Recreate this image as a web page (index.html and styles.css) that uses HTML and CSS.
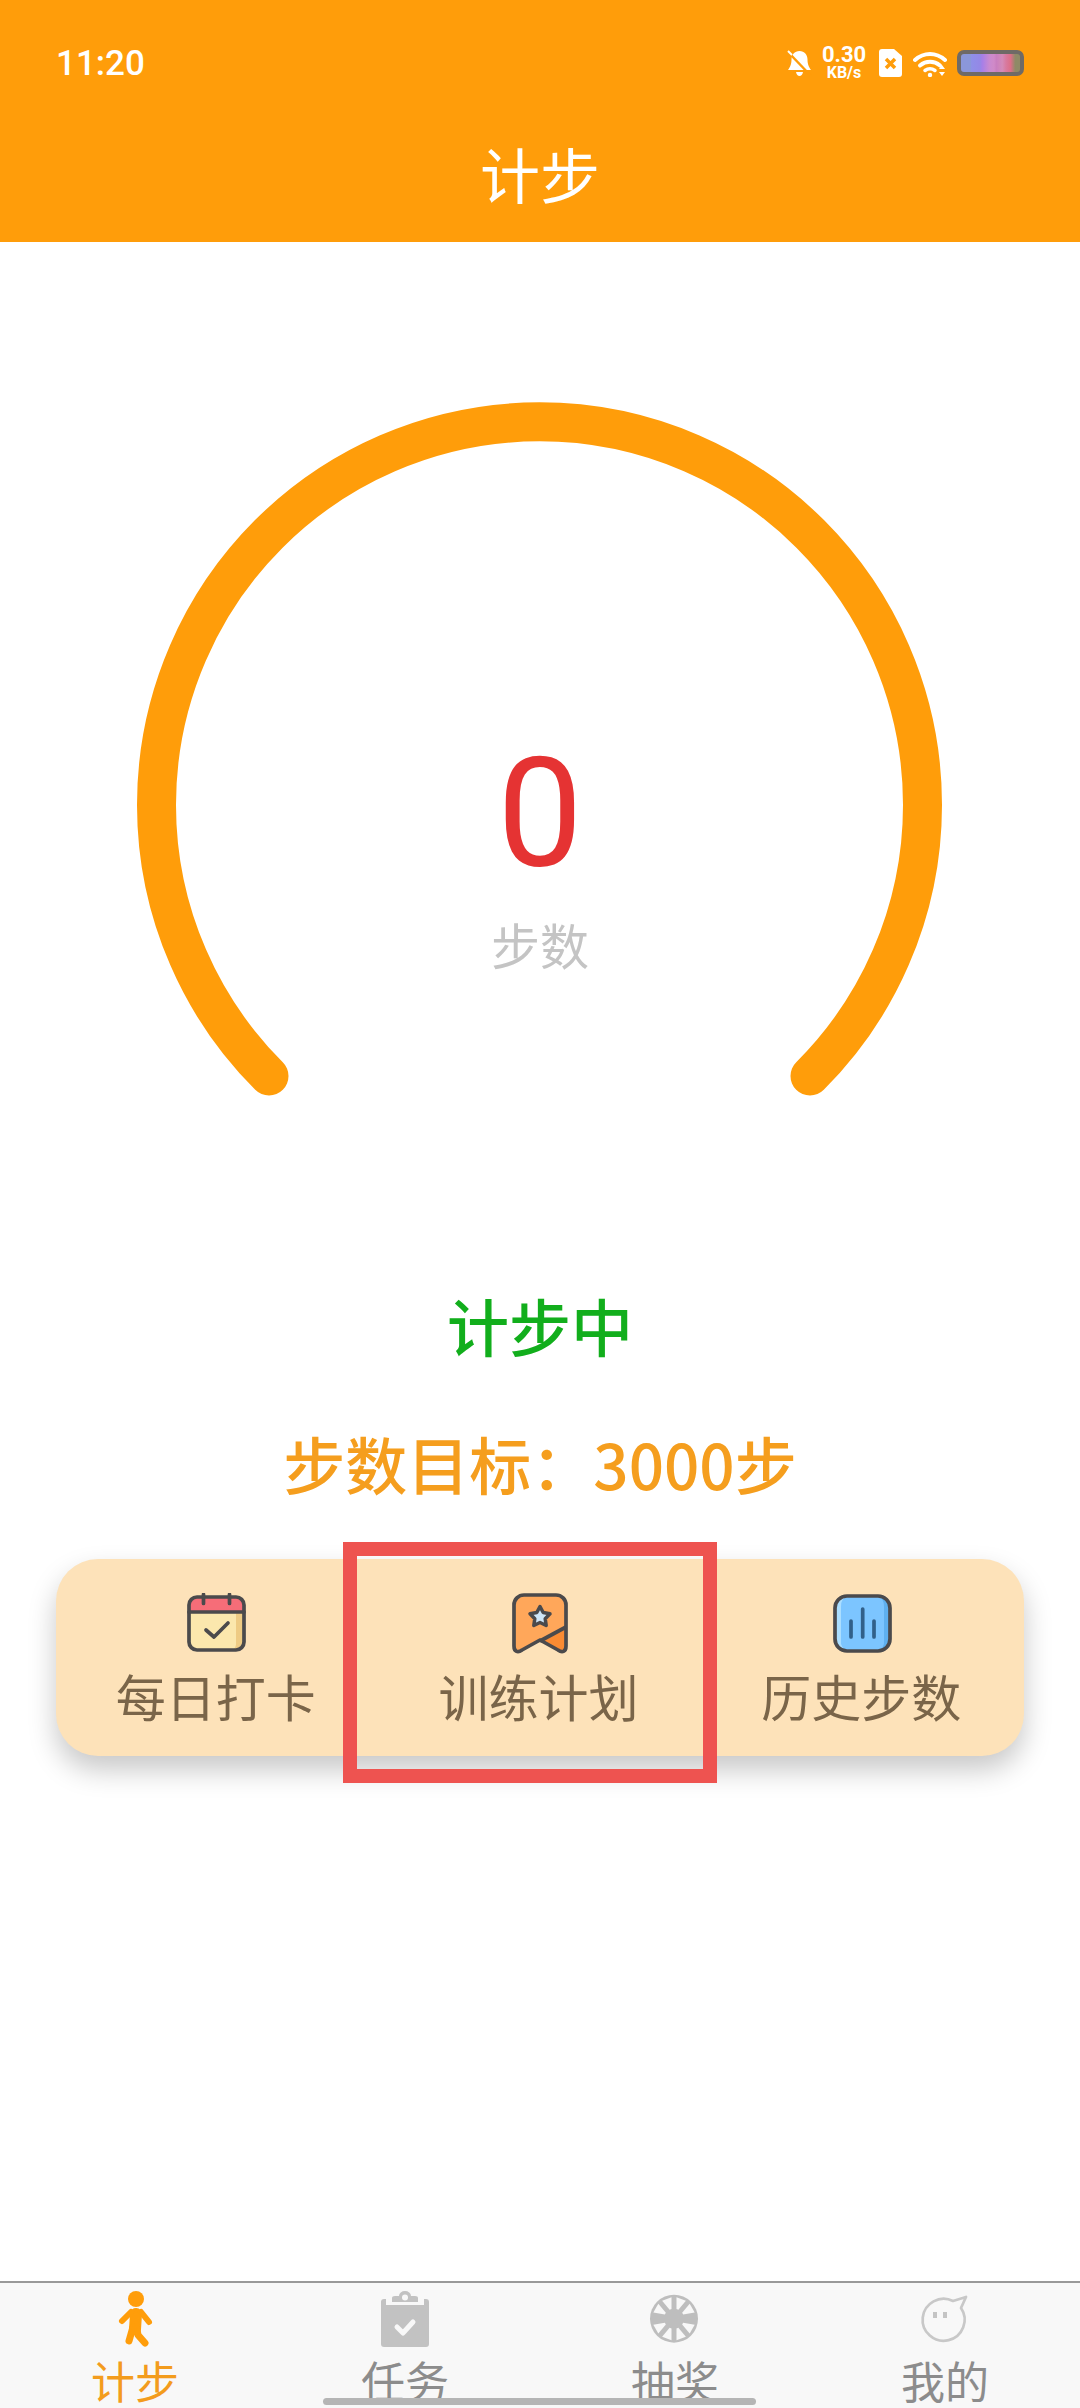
FILE: index.html
```html
<!DOCTYPE html>
<html lang="zh-CN">
<head>
    <meta charset="UTF-8">
    <meta name="viewport" content="width=device-width, initial-scale=1.0">
    <title>计步</title>
    <link rel="stylesheet" href="styles.css">
</head>
<body>

    <header class="header">
        <div class="status-bar">
            <span class="clock">11:20</span>
            <div class="status-icons">
                <svg class="icon-bell" viewBox="0 0 25 27">
                    <path d="M12.500 1c-5 0-8 3.800-8 8.500 0 5-1.500 7.500-3.500 10.500h23c-2-3-3.500-5.500-3.500-10.500 0-4.700-3-8.500-8-8.500z" fill="#fff"/>
                    <path d="M9 22h7c-.5 2.600-1.800 4-3.500 4S9.500 24.600 9 22z" fill="#fff"/>
                    <path d="M2 3l22 23" stroke="#ff9d0a" stroke-width="2.500"/>
                    <path d="M1 1l4 4" stroke="#fff" stroke-width="2"/>
                </svg>
                <div class="net-speed">
                    <span class="net-value">0.30</span>
                    <span class="net-unit">KB/s</span>
                </div>
                <svg class="icon-sim" viewBox="0 0 23 28">
                    <path d="M3 0h12l8 7v18a3 3 0 0 1-3 3H3a3 3 0 0 1-3-3V3a3 3 0 0 1 3-3z" fill="#fff"/>
                    <path d="M7 10l9 9M16 10l-9 9" stroke="#ff9d0a" stroke-width="3.500"/>
                </svg>
                <svg class="icon-wifi" viewBox="0 0 34 27">
                    <path d="M2 10C11 2 23 2 32 10" fill="none" stroke="#fff" stroke-width="4" stroke-linecap="round"/>
                    <path d="M7 15.500c6-5 14-5 20 0" fill="none" stroke="#fff" stroke-width="4" stroke-linecap="round"/>
                    <path d="M12 20.500c3-2.200 7-2.200 10 0" fill="none" stroke="#fff" stroke-width="3.500" stroke-linecap="round"/>
                    <circle cx="17" cy="25" r="2.200" fill="#fff"/>
                    <path d="M29 15l3 4h-6zM29 26l3-4h-6z" fill="#fff"/>
                </svg>
                <div class="battery"><div class="battery-fill"></div></div>
            </div>
        </div>
        <h1 class="page-title">计步</h1>
    </header>

    <main class="main">
        <div class="gauge">
            <svg class="gauge-arc" viewBox="120 385 840 720">
                <path d="M269 1076A383 383 0 1 1 810 1076" fill="none" stroke="#ff9d0a" stroke-width="39" stroke-linecap="round"/>
            </svg>
            <div class="gauge-text">
                <div class="step-count">0</div>
                <div class="step-label">步数</div>
            </div>
        </div>

        <div class="step-state">计步中</div>
        <div class="step-goal">步数目标：3000步</div>

        <div class="menu-card">
            <div class="menu-item">
                <svg class="menu-icon" viewBox="0 0 62 62">
                    <path d="M3 19v-7a8 8 0 0 1 8-8h39a8 8 0 0 1 8 8v7z" fill="#f66d78"/>
                    <path d="M3 19h55v31a7 7 0 0 1-7 7H10a7 7 0 0 1-7-7z" fill="#fbe7ad"/>
                    <path d="M50 19h8v31a7 7 0 0 1-7 7h-5a7 7 0 0 0 4-7z" fill="#eecb84"/>
                    <rect x="3" y="4" width="55" height="53" rx="8" fill="none" stroke="#4b4a4c" stroke-width="3.700"/>
                    <path d="M3 19h55M17.500 1.500v9M43.500 1.500v9" fill="none" stroke="#4b4a4c" stroke-width="3.700" stroke-linecap="round"/>
                    <path d="M20 37l8 7 14-14" fill="none" stroke="#4b4a4c" stroke-width="3.700" stroke-linecap="round" stroke-linejoin="round"/>
                </svg>
                <span class="menu-text">每日打卡</span>
            </div>
            <div class="menu-item">
                <svg class="menu-icon" viewBox="0 0 62 62">
                    <path d="M5 53V12a10 10 0 0 1 10-10h32a10 10 0 0 1 10 10v41c0 6-4 7-8 4L31 47 13 57c-4 3-8 2-8-4z" fill="#ffa75a"/>
                    <path d="M57 34v19c0 6-4 7-8 4L31 47z" fill="#fa8b33"/>
                    <path d="M5 53V12a10 10 0 0 1 10-10h32a10 10 0 0 1 10 10v41c0 6-4 7-8 4L31 47 13 57c-4 3-8 2-8-4z" fill="none" stroke="#4b4a4c" stroke-width="3.700" stroke-linejoin="round"/>
                    <path d="M31 48l26-14" fill="none" stroke="#4b4a4c" stroke-width="3.700"/>
                    <path d="M31 13.500l3.200 6 6.800 1.300-4.800 4.900 1 6.800-6.200-3-6.200 3 1-6.800-4.800-4.900 6.800-1.300z" fill="#cfe6f8" stroke="#4b4a4c" stroke-width="3.500" stroke-linejoin="round"/>
                </svg>
                <span class="menu-text">训练计划</span>
            </div>
            <div class="menu-item">
                <svg class="menu-icon" viewBox="0 0 62 62">
                    <rect x="3" y="3" width="55" height="55" rx="12" fill="#7cc5ff"/>
                    <path d="M15 3h-1A11 11 0 0 0 3 14v33a11 11 0 0 0 11 11h1a11 11 0 0 1-6-11V14A11 11 0 0 1 15 3z" fill="#abdeff"/>
                    <path d="M46 3h1a11 11 0 0 1 11 11v33a11 11 0 0 1-11 11h-1a11 11 0 0 0 6-11V14a11 11 0 0 0-6-11z" fill="#5fb0ef"/>
                    <rect x="3" y="3" width="55" height="55" rx="12" fill="none" stroke="#4b4a4c" stroke-width="3.700"/>
                    <path d="M19 28v16M30.700 16v28M42 28v16" fill="none" stroke="#31608a" stroke-width="3.700" stroke-linecap="round"/>
                </svg>
                <span class="menu-text">历史步数</span>
            </div>
            <div class="highlight-box"></div>
        </div>
    </main>

    <nav class="tabbar">
        <div class="tab tab-active">
            <svg class="tab-icon" viewBox="0 0 56 56">
                <circle cx="29" cy="8" r="8" fill="#ff9d0a"/>
                <path d="M29 23l-1 15" fill="none" stroke="#ff9d0a" stroke-width="12" stroke-linecap="round"/>
                <path d="M24 21l-9 9M34 21l8 10" fill="none" stroke="#ff9d0a" stroke-width="6" stroke-linecap="round"/>
                <path d="M26 36l-4 14M30 38l1 6 7 8" fill="none" stroke="#ff9d0a" stroke-width="7" stroke-linecap="round" stroke-linejoin="round"/>
            </svg>
            <span class="tab-text">计步</span>
        </div>
        <div class="tab">
            <svg class="tab-icon" viewBox="0 0 56 56">
                <path d="M7 8h2v6h38V8h2a3 3 0 0 1 3 3v42a3 3 0 0 1-3 3H7a3 3 0 0 1-3-3V11a3 3 0 0 1 3-3z" fill="#c2c2c2"/>
                <path d="M15 11V7q0-2 3-2h4a6 5 0 0 1 12 0h4q3 0 3 2v4z" fill="#c2c2c2"/>
                <circle cx="28" cy="6.500" r="3" fill="#f8f8f8"/>
                <path d="M20 36l6 6 10-11" fill="none" stroke="#f8f8f8" stroke-width="5" stroke-linecap="round" stroke-linejoin="round"/>
            </svg>
            <span class="tab-text">任务</span>
        </div>
        <div class="tab">
            <svg class="tab-icon" viewBox="0 0 56 56">
                <defs>
                    <path id="wedge" d="M-1-10h2L5-21H-5z" fill="#f8f8f8"/>
                </defs>
                <circle cx="27" cy="27.700" r="24" fill="#bebebe"/>
                <g transform="translate(27 27.700)">
                    <use href="#wedge" transform="rotate(20)"/>
                    <use href="#wedge" transform="rotate(60)"/>
                    <use href="#wedge" transform="rotate(120)"/>
                    <use href="#wedge" transform="rotate(160)"/>
                    <use href="#wedge" transform="rotate(200)"/>
                    <use href="#wedge" transform="rotate(240)"/>
                    <use href="#wedge" transform="rotate(300)"/>
                    <use href="#wedge" transform="rotate(340)"/>
                </g>
            </svg>
            <span class="tab-text">抽奖</span>
        </div>
        <div class="tab">
            <svg class="tab-icon" viewBox="0 0 56 56">
                <path d="M44 17A21 21 0 1 1 36 10L49 6z" fill="none" stroke="#c8c8c8" stroke-width="2.700" stroke-linejoin="round"/>
                <path d="M18 21v6M28 21v6" stroke="#c4c4c4" stroke-width="4"/>
            </svg>
            <span class="tab-text">我的</span>
        </div>
        <div class="home-bar"></div>
    </nav>

</body>
</html>
```

FILE: styles.css
```css
* {
    box-sizing: border-box;
}

body {
    font-family: 'Noto Sans CJK SC', 'Noto Sans', sans-serif;
    margin: 0;
    width: 1080px;
    height: 2408px;
    background: #fff;
    display: flex;
    flex-direction: column;
    overflow: hidden;
}

.header {
    height: 242px;
    background: #ff9d0a;
    color: #fff;
    flex-shrink: 0;
}

.status-bar {
    height: 126px;
    padding: 0 57px 0 56px;
    display: flex;
    justify-content: space-between;
    align-items: center;
}

.clock {
    font-family: Roboto, sans-serif;
    font-size: 35px;
    font-weight: 500;
}

.status-icons {
    display: flex;
    align-items: center;
    margin-right: -1px;
}

.icon-bell {
    width: 25px;
    height: 27px;
}

.net-speed {
    width: 44px;
    margin-left: 10px;
    display: flex;
    flex-direction: column;
    align-items: center;
    font-family: Roboto, sans-serif;
    font-weight: 700;
}

.net-value {
    font-size: 22px;
    line-height: 20px;
}

.net-unit {
    font-size: 16px;
    line-height: 16px;
}

.icon-sim {
    width: 23px;
    height: 28px;
    margin-left: 13px;
}

.icon-wifi {
    width: 34px;
    height: 27px;
    margin-left: 11px;
}

.battery {
    width: 67px;
    height: 26px;
    margin-left: 10px;
    border: 4px solid #6f6a66;
    border-radius: 7px;
    background: #6f6a66;
}

.battery-fill {
    height: 100%;
    border-radius: 3px;
    background: linear-gradient(90deg, #8b97d9 0%, #8b97d9 16%, #8f8fe8 18%, #9488e6 32%, #a77fe8 36%, #c98ad0 48%, #d08ac8 56%, #c97fc0 60%, #d48bb8 70%, #d87aa0 76%, #dc6f88 84%, #8f8a66 92%, #8f8a66 100%);
}

.page-title {
    margin: 0;
    font-size: 60px;
    font-weight: 400;
    line-height: 94px;
    text-align: center;
}

.main {
    flex: 1;
    display: flex;
    flex-direction: column;
    align-items: center;
}

.gauge {
    display: grid;
    margin-top: 143px;
}

.gauge-arc {
    grid-area: 1 / 1;
    width: 840px;
    height: 720px;
}

.gauge-text {
    grid-area: 1 / 1;
    padding-top: 313px;
    text-align: center;
}

.step-count {
    color: #e53333;
    font-family: Roboto, sans-serif;
    font-size: 152px;
    line-height: 232px;
}

.step-label {
    color: #c4c4c4;
    font-size: 49px;
    line-height: 70px;
    margin-top: -21px;
}

.step-state {
    margin-top: 180px;
    color: #12ae1c;
    font-size: 62px;
    font-weight: 500;
    line-height: 80px;
}

.step-goal {
    margin-top: 58px;
    color: #f59e1e;
    font-size: 62px;
    font-weight: 500;
    line-height: 80px;
}

.menu-card {
    position: relative;
    width: 968px;
    height: 197px;
    margin-top: 56px;
    padding-top: 34px;
    display: flex;
    background: #fde2b9;
    border-radius: 42px;
    box-shadow: 0 14px 28px rgba(0, 0, 0, 0.22);
}

.menu-item {
    flex: 1;
    display: flex;
    flex-direction: column;
    align-items: center;
}

.menu-icon {
    width: 62px;
    height: 62px;
}

.menu-text {
    margin-top: 9px;
    margin-right: 3px;
    color: #7a6549;
    font-size: 50px;
    line-height: 62px;
}

.highlight-box {
    position: absolute;
    left: 287px;
    top: -17px;
    width: 374px;
    height: 241px;
    border: 14px solid #ee5350;
}

.tabbar {
    position: relative;
    height: 127px;
    display: flex;
    flex-shrink: 0;
    padding-top: 8px;
    background: #f8f8f8;
    border-top: 2px solid #999;
}

.tab {
    flex: 1;
    display: flex;
    flex-direction: column;
    align-items: center;
    color: #8c8c8c;
}

.tab-active {
    color: #f39c1d;
}

.tab-icon {
    width: 56px;
    height: 56px;
}

.tab-text {
    margin-top: 8px;
    font-size: 44px;
    line-height: 50px;
}

.home-bar {
    position: absolute;
    left: 323px;
    bottom: 3px;
    width: 433px;
    height: 7px;
    border-radius: 4px;
    background: #b5b5b5;
}
```
